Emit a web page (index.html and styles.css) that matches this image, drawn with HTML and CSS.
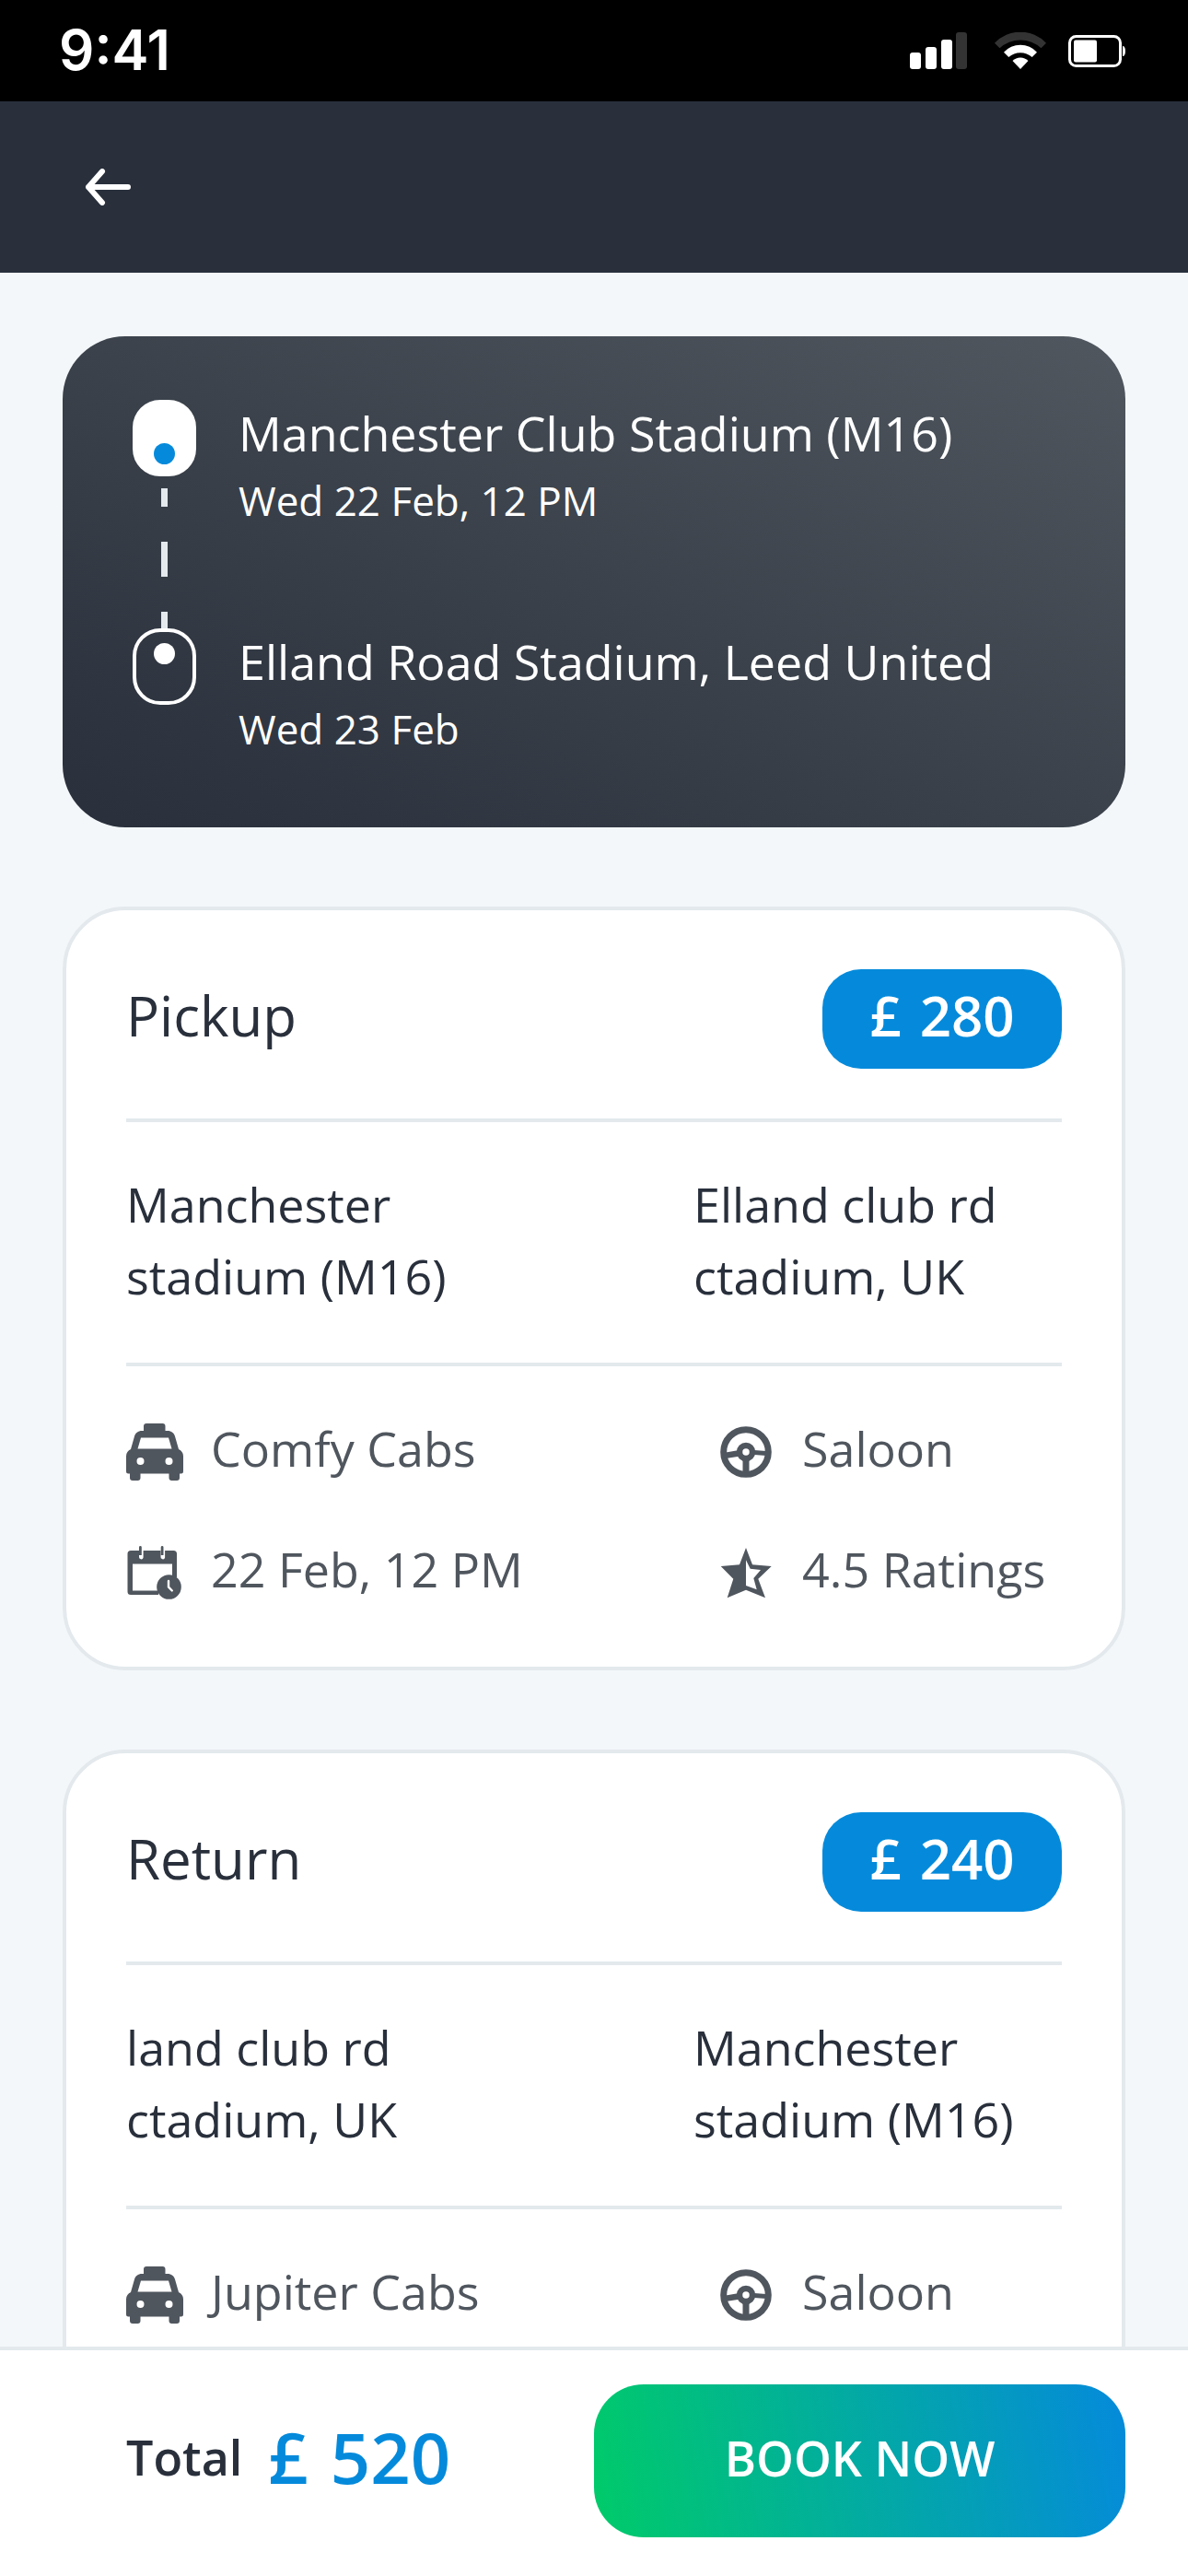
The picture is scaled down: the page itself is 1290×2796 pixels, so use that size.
FILE: index.html
```html
<!DOCTYPE html>
<html lang="en">
<head>
    <meta charset="UTF-8">
    <meta name="viewport" content="width=device-width, initial-scale=1.0">
    <title>Booking Summary</title>
    <link rel="stylesheet" href="styles.css">
</head>
<body>
    <!-- Shared icons -->
    <svg class="sprite" aria-hidden="true">
        <symbol id="icon-taxi" viewBox="0 0 62 62">
            <path fill-rule="evenodd" d="M22 0h17.500a3 3 0 0 1 3 3v5h2.500c4 0 7 2.500 8 6l4 14c3 1.500 5 4 5 7.500V52a2.500 2.500 0 0 1-2.500 2.500H58V59a3 3 0 0 1-3 3h-5.500a3 3 0 0 1-3-3v-4.500h-31V59a3 3 0 0 1-3 3H7a3 3 0 0 1-3-3v-4.500H2.500A2.500 2.500 0 0 1 0 52V35.500C0 32 2 29.500 5 28l4-14c1-3.500 4-6 8-6h2V3a3 3 0 0 1 3-3zM16 15.500l-3.500 12h37l-3.500-12zM15.500 37a4 4 0 1 0 0 8 4 4 0 0 0 0-8zM46.500 37a4 4 0 1 0 0 8 4 4 0 0 0 0-8z"/>
        </symbol>
        <symbol id="icon-calendar" viewBox="0 0 62 62">
            <path fill-rule="evenodd" d="M5 7h9v6.500a2.300 2.300 0 1 0 4.600 1V7h18.900v6.500a2.300 2.300 0 1 0 4.600 1V7h9.400a3.500 3.500 0 0 1 3.500 3.500V36h-5V21.500H7v29h28V55H5a3.500 3.500 0 0 1-3.500-3.500v-41A3.500 3.500 0 0 1 5 7z"/>
            <path d="M14 3.500a1.400 1.400 0 0 1 2.800 0V12H14zM37.700 3.500a1.400 1.400 0 0 1 2.800 0V12h-2.800z"/>
            <circle cx="46.500" cy="46.500" r="13.300"/>
            <path d="M46 40v6.500l3.800 4" fill="none" stroke="#fff" stroke-width="2.400" stroke-linecap="round"/>
        </symbol>
        <symbol id="icon-wheel" viewBox="0 0 62 62">
            <circle cx="31" cy="31" r="24.300" fill="none" stroke="currentColor" stroke-width="7"/>
            <circle cx="31" cy="31" r="7" fill="none" stroke="currentColor" stroke-width="6.500"/>
            <path d="M9 31.500l13-2.200v6.700L9 38zM40 29l13 1v5l-13-1zM27.500 38h7v16h-7z"/>
        </symbol>
        <symbol id="icon-star" viewBox="0 0 62 62">
            <path fill-rule="evenodd" d="M31 4l7 18.300 20.700 1.700-14.400 13.700L52 58.300l-21-8.600-20.300 8.600 6.600-20.600L3.700 24 24 22.300zM31 17.300V45l11.700 4.300L39.300 37 47 28l-11.300-1.300z"/>
        </symbol>
    </svg>

    <div class="app">
        <div class="status-bar">
            <span class="time">9:41</span>
            <div class="status-icons">
                <svg width="62" height="40" viewBox="0 0 62 40" fill="#fff">
                    <rect x="0" y="22" width="12" height="18" rx="3"/>
                    <rect x="17" y="16" width="12" height="24" rx="3"/>
                    <rect x="34" y="8" width="12" height="32" rx="3"/>
                    <rect x="50" y="0" width="12" height="40" rx="3" fill="#333"/>
                </svg>
                <svg width="62" height="40" viewBox="-6 0 62 40" fill="#fff">
                    <path fill="#333" d="M0 11.700A38.600 38.600 0 0 1 56 11.700L50.500 17.300A33 33 0 0 0 5.500 17.300z"/>
                    <path d="M10 21.700A24.300 24.300 0 0 1 46 21.700L40.700 27A19.500 19.500 0 0 0 15.300 27z"/>
                    <path d="M19.500 31A12 12 0 0 1 36.500 31L28 40z"/>
                </svg>
                <svg width="62" height="40" viewBox="0 0 62 40" fill="#fff">
                    <rect x="1.500" y="4.500" width="55" height="32" rx="7" fill="none" stroke="#fff" stroke-width="3"/>
                    <rect x="6" y="8.500" width="25" height="24" rx="2"/>
                    <path d="M59 15c2 0 3 2 3 5.500s-1 5.500-3 5.500z"/>
                </svg>
            </div>
        </div>

        <header class="navbar">
            <button type="button" class="back-btn" aria-label="Back">
                <svg width="50" height="40" viewBox="0 0 50 40" fill="none" stroke="#fff" stroke-width="6" stroke-linecap="round" stroke-linejoin="round">
                    <path d="M47 20H4M19 3L4 20l15 17"/>
                </svg>
            </button>
        </header>

        <main class="content">
            <section class="route">
                <div class="stop">
                    <div class="stop-marker">
                        <span class="pin pin-start"></span>
                        <span class="pin-line"></span>
                    </div>
                    <div>
                        <p class="stop-name">Manchester Club Stadium (M16)</p>
                        <p class="stop-date">Wed 22 Feb, 12 PM</p>
                    </div>
                </div>
                <div class="stop">
                    <div class="stop-marker">
                        <span class="pin pin-end"></span>
                    </div>
                    <div>
                        <p class="stop-name">Elland Road Stadium, Leed United</p>
                        <p class="stop-date">Wed 23 Feb</p>
                    </div>
                </div>
            </section>

            <section class="trip">
                <div class="trip-head">
                    <h2>Pickup</h2>
                    <div class="price"><span>£</span><span>280</span></div>
                </div>
                <div class="trip-places">
                    <p>Manchester<br>stadium (M16)</p>
                    <p>Elland club rd<br>ctadium, UK</p>
                </div>
                <ul class="trip-details">
                    <li><svg class="icon"><use href="#icon-taxi"/></svg><span>Comfy Cabs</span></li>
                    <li><svg class="icon"><use href="#icon-wheel"/></svg><span>Saloon</span></li>
                    <li><svg class="icon"><use href="#icon-calendar"/></svg><span>22 Feb, 12 PM</span></li>
                    <li><svg class="icon"><use href="#icon-star"/></svg><span>4.5 Ratings</span></li>
                </ul>
            </section>

            <section class="trip">
                <div class="trip-head">
                    <h2>Return</h2>
                    <div class="price"><span>£</span><span>240</span></div>
                </div>
                <div class="trip-places">
                    <p>land club rd<br>ctadium, UK</p>
                    <p>Manchester<br>stadium (M16)</p>
                </div>
                <ul class="trip-details">
                    <li><svg class="icon"><use href="#icon-taxi"/></svg><span>Jupiter Cabs</span></li>
                    <li><svg class="icon"><use href="#icon-wheel"/></svg><span>Saloon</span></li>
                </ul>
            </section>
        </main>

        <footer class="checkout">
            <div class="total">
                <span class="total-label">Total</span>
                <div class="total-price"><span>£</span><span>520</span></div>
            </div>
            <button type="button" class="btn">BOOK NOW</button>
        </footer>
    </div>
</body>
</html>
```
FILE: styles.css
```css
:root {
    --color-primary: #058adb;
    --color-green: #00cb69;
    --color-dark: #29303c;
    --color-grey: #50565e;
    --color-border: #e3e9ed;
    --color-background: #f3f7fa;
}

* {
    box-sizing: border-box;
    margin: 0;
    padding: 0;
}

body {
    font-family: 'Open Sans', sans-serif;
    font-size: 52px;
    line-height: 78px;
    background-color: var(--color-background);
    color: var(--color-dark);
}

svg {
    display: block;
}

.sprite {
    display: none;
}

.app {
    display: flex;
    flex-direction: column;
    height: 100vh;
}

/* Status bar */
.status-bar {
    display: flex;
    justify-content: space-between;
    align-items: center;
    height: 110px;
    padding: 0 68px 0 64px;
    background-color: #000;
    color: #fff;
}

.time {
    padding-bottom: 2px;
    font-family: 'Inter', sans-serif;
    font-size: 60px;
    font-weight: 600;
}

.status-icons {
    display: flex;
    gap: 24px;
}

/* Navbar */
.navbar {
    display: flex;
    align-items: center;
    height: 186px;
    padding: 0 68px;
    background-color: var(--color-dark);
}

.back-btn {
    padding: 24px;
    background: none;
    border: none;
    cursor: pointer;
}

/* Content */
.content {
    flex: 1;
    min-height: 0;
    display: flex;
    flex-direction: column;
    gap: 86px;
    padding: 69px 68px 0;
    overflow: hidden;
}

.content > * {
    flex-shrink: 0;
}

.route {
    padding: 69px 76px 70px;
    border-radius: 68px;
    background: linear-gradient(to top right, #292f3b, #3b424b 50%, #50575f);
    color: #fff;
}

.stop {
    display: flex;
    gap: 46px;
}

.stop:first-child {
    min-height: 248px;
}

.stop-marker {
    display: flex;
    flex-direction: column;
    align-items: center;
}

.stop-name {
    line-height: 72px;
}

.stop-date {
    font-size: 44px;
    line-height: 74px;
}

.pin {
    display: flex;
    justify-content: center;
    width: 69px;
    height: 83px;
    padding: 12px;
    border: 4px solid #fff;
    border-radius: 30px;
}

.pin::before {
    content: "";
    width: 23px;
    height: 23px;
    border-radius: 50%;
    background-color: #fff;
}

.pin-start {
    align-items: flex-end;
    padding-bottom: 9px;
    background-color: #fff;
}

.pin-start::before {
    background-color: var(--color-primary);
}

.pin-line {
    flex: 1;
    width: 7px;
    margin-top: 13px;
    background: repeating-linear-gradient(#e3e9ed 0 20px, transparent 20px 58px, #e3e9ed 58px 76px);
}

/* Trip cards */
.trip {
    padding: 64px 65px 71px;
    background-color: #fff;
    border: 4px solid var(--color-border);
    border-radius: 68px;
}

.trip:last-child {
    padding-bottom: 140px;
}

.trip-head {
    display: flex;
    justify-content: space-between;
    align-items: center;
    padding-bottom: 54px;
    border-bottom: 4px solid var(--color-border);
}

.trip-head h2 {
    padding-bottom: 8px;
    font-size: 60px;
    font-weight: 500;
}

.price {
    display: flex;
    justify-content: center;
    align-items: center;
    gap: 20px;
    width: 260px;
    height: 108px;
    padding-bottom: 8px;
    border-radius: 42px;
    background-color: var(--color-primary);
    color: #fff;
    font-size: 60px;
    font-weight: 600;
}

.trip-places {
    display: grid;
    grid-template-columns: 1fr 400px;
    padding: 50px 0 55px;
    border-bottom: 4px solid var(--color-border);
}

.trip-details {
    display: grid;
    grid-template-columns: 1fr 374px;
    row-gap: 69px;
    padding-top: 62px;
    list-style: none;
    color: var(--color-grey);
}

.trip-details li {
    display: flex;
    align-items: center;
    gap: 30px;
    height: 62px;
}

.trip-details span {
    padding-bottom: 8px;
}

.icon {
    width: 62px;
    height: 62px;
    fill: currentColor;
}

/* Footer */
.checkout {
    display: grid;
    grid-template-columns: 1fr 1fr;
    align-items: center;
    padding: 37px 68px 42px;
    background-color: #fff;
    border-top: 4px solid var(--color-border);
}

.total {
    display: flex;
    align-items: center;
    gap: 28px;
    padding: 0 0 8px 69px;
}

.total-label {
    font-weight: 600;
}

.total-price {
    display: flex;
    gap: 24px;
    color: var(--color-primary);
    font-size: 76px;
    font-weight: 600;
}

.btn {
    height: 166px;
    padding-bottom: 8px;
    border: none;
    border-radius: 54px;
    background: linear-gradient(80deg, var(--color-green), var(--color-primary));
    color: #fff;
    font-family: inherit;
    font-size: 52px;
    font-weight: 600;
    cursor: pointer;
}
```
